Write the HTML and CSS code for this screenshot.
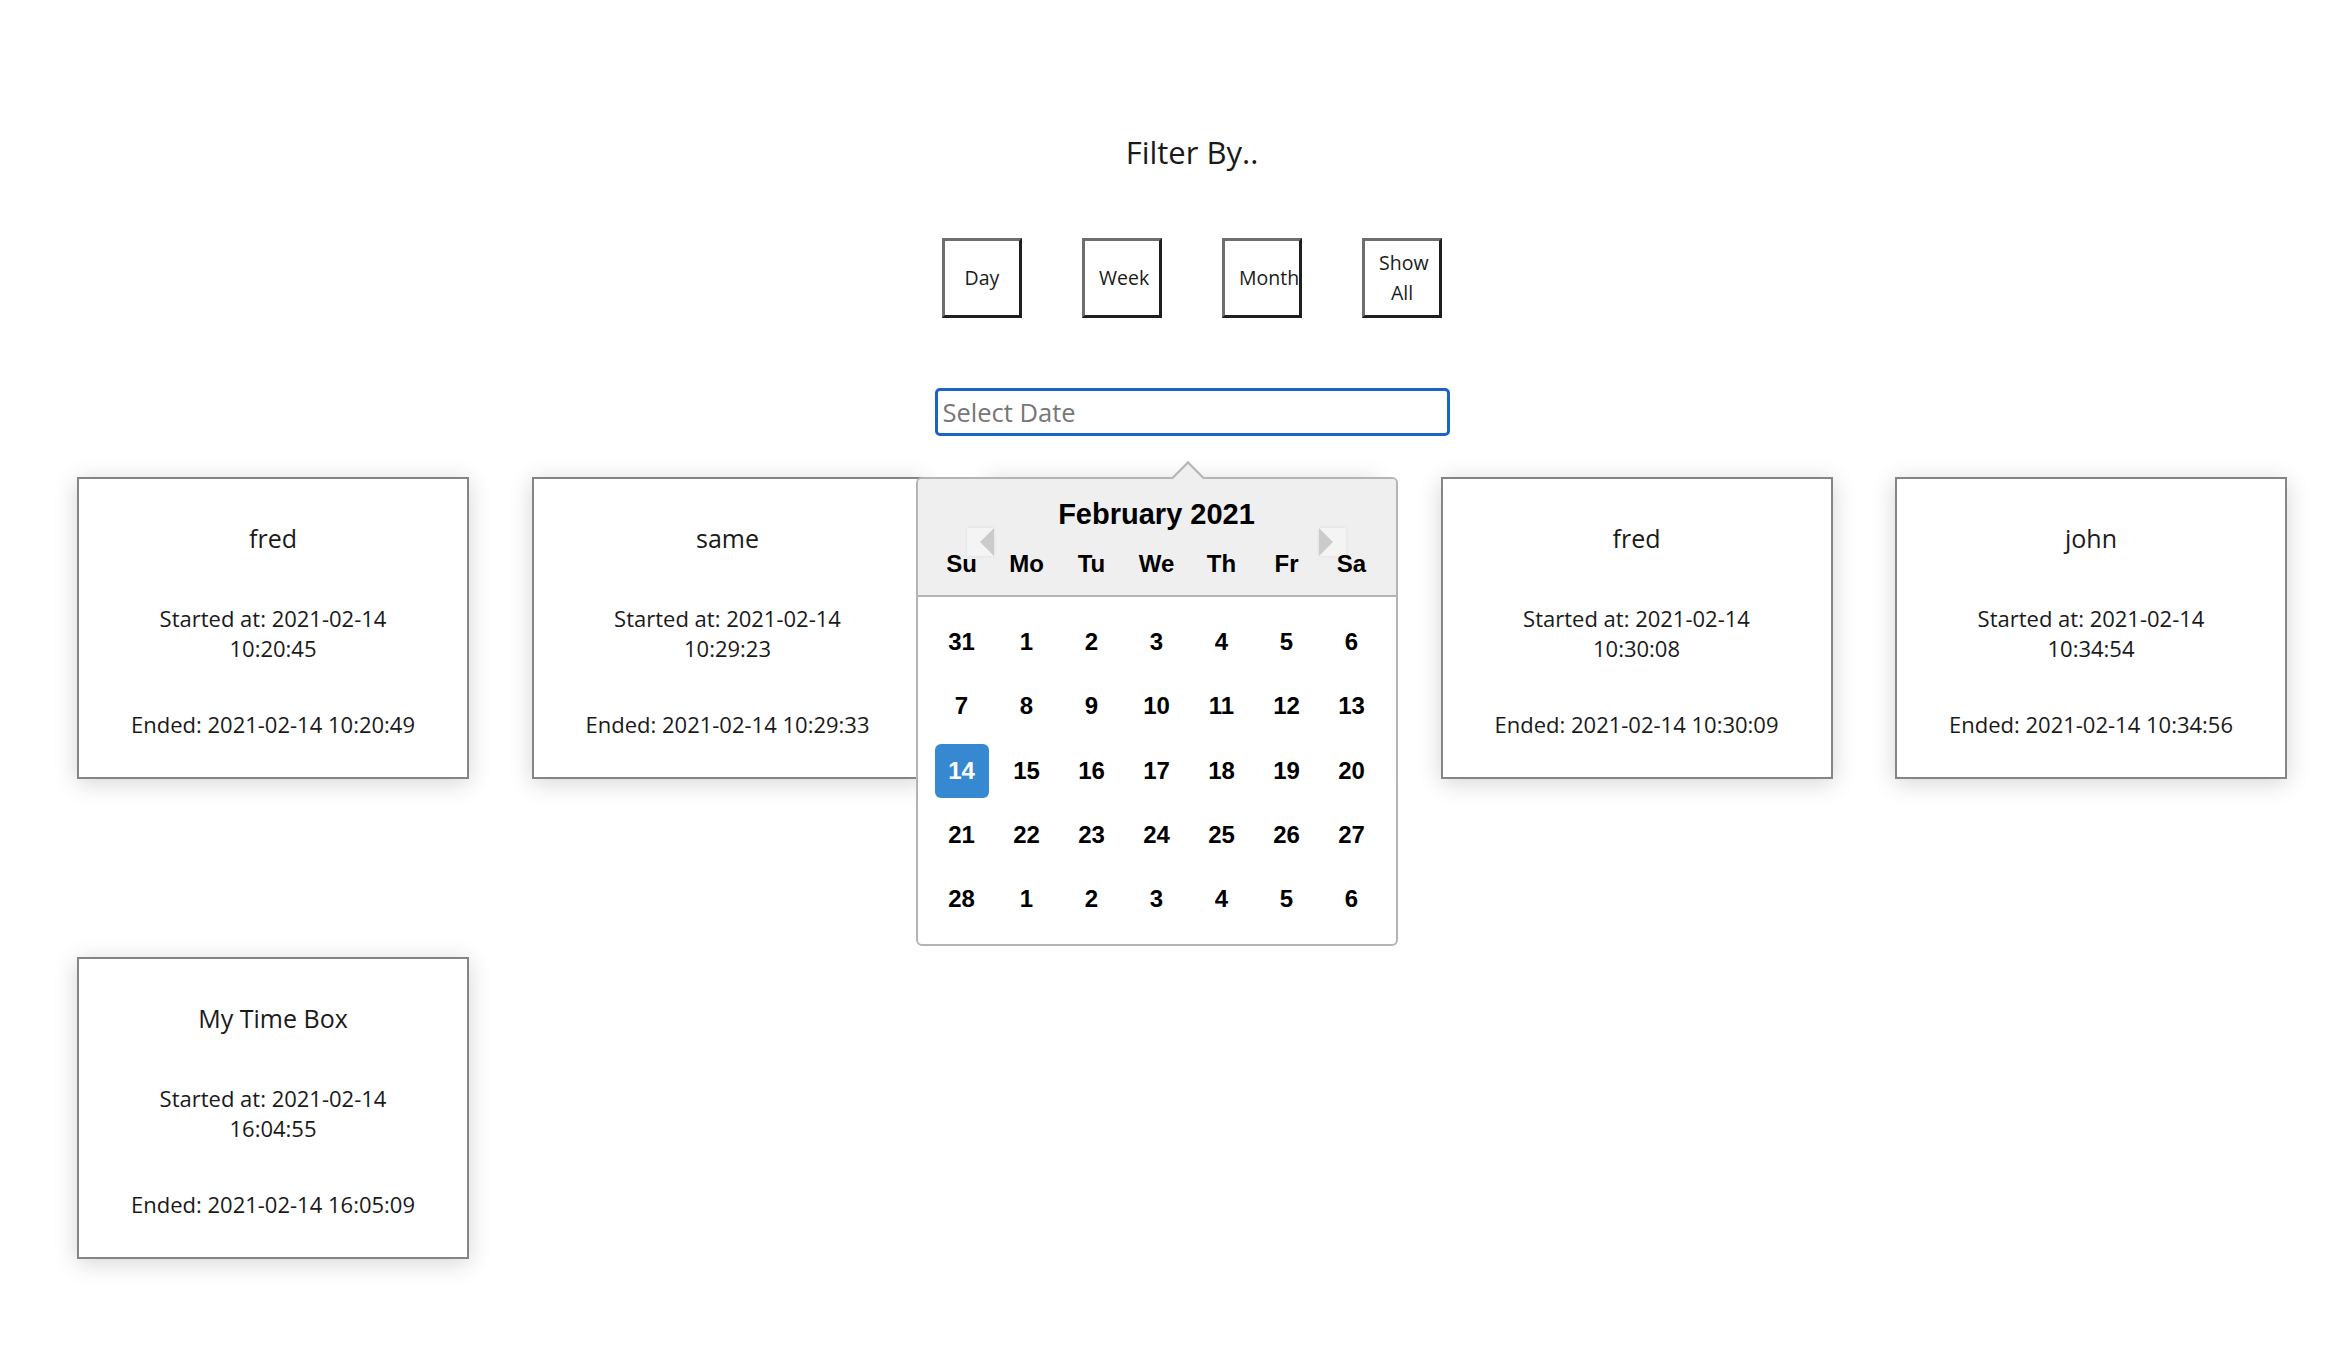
FILE: index.html
```html
<!DOCTYPE html>
<html lang="en">
<head>
<meta charset="utf-8">
<title>Time Boxes</title>
<link rel="stylesheet" href="styles.css">
</head>
<body>
<div class="top">
  <h1 class="filter-title">Filter By..</h1>
  <div class="filters">
    <button class="fbtn">Day</button>
    <button class="fbtn">Week</button>
    <button class="fbtn">Month</button>
    <button class="fbtn">Show All</button>
  </div>
  <div class="picker">
    <input class="date-input" type="text" placeholder="Select Date">
    <div class="cal">
      <div class="cal-tip"></div>
      <div class="cal-head">
        <div class="cal-title">February 2021</div>
        <button class="cal-nav cal-prev" aria-label="Previous month"><svg width="27" height="28" viewBox="0 0 27 28"><polygon points="13,14 27,0 27,28" fill="#cbcbcb"/></svg></button>
        <button class="cal-nav cal-next" aria-label="Next month"><svg width="27" height="28" viewBox="0 0 27 28"><polygon points="0,0 14,14 0,28" fill="#cbcbcb"/></svg></button>
        <div class="cal-grid cal-dows">
          <span>Su</span><span>Mo</span><span>Tu</span><span>We</span><span>Th</span><span>Fr</span><span>Sa</span>
        </div>
      </div>
      <div class="cal-grid cal-days">
        <span>31</span><span>1</span><span>2</span><span>3</span><span>4</span><span>5</span><span>6</span>
        <span>7</span><span>8</span><span>9</span><span>10</span><span>11</span><span>12</span><span>13</span>
        <span><b class="sel">14</b></span><span>15</span><span>16</span><span>17</span><span>18</span><span>19</span><span>20</span>
        <span>21</span><span>22</span><span>23</span><span>24</span><span>25</span><span>26</span><span>27</span>
        <span>28</span><span>1</span><span>2</span><span>3</span><span>4</span><span>5</span><span>6</span>
      </div>
    </div>
  </div>
</div>
<div class="cards">
  <div class="card">
    <div class="card-title">fred</div>
    <p class="card-start">Started at: 2021-02-14 10:20:45</p>
    <p class="card-end">Ended: 2021-02-14 10:20:49</p>
  </div>
  <div class="card">
    <div class="card-title">same</div>
    <p class="card-start">Started at: 2021-02-14 10:29:23</p>
    <p class="card-end">Ended: 2021-02-14 10:29:33</p>
  </div>
  <div class="card card-hidden" aria-hidden="true"></div>
  <div class="card">
    <div class="card-title">fred</div>
    <p class="card-start">Started at: 2021-02-14 10:30:08</p>
    <p class="card-end">Ended: 2021-02-14 10:30:09</p>
  </div>
  <div class="card">
    <div class="card-title">john</div>
    <p class="card-start">Started at: 2021-02-14 10:34:54</p>
    <p class="card-end">Ended: 2021-02-14 10:34:56</p>
  </div>
  <div class="card">
    <div class="card-title">My Time Box</div>
    <p class="card-start">Started at: 2021-02-14 16:04:55</p>
    <p class="card-end">Ended: 2021-02-14 16:05:09</p>
  </div>
</div>
</body>
</html>
```
FILE: styles.css
```css
html, body {
  margin: 0;
  padding: 0;
  background: #fff;
}
body {
  font-family: "Open Sans", "Noto Sans", sans-serif;
  color: #1a1a1a;
  width: 2348px;
  min-height: 1346px;
}
.top {
  padding: 131px 0 0 36px;
  text-align: center;
}
.filter-title {
  margin: 0;
  font-size: 31px;
  font-weight: 400;
  line-height: 42px;
}
.filters {
  display: flex;
  justify-content: center;
  gap: 60px;
  margin-top: 65px;
}
.fbtn {
  box-sizing: border-box;
  width: 80px;
  height: 80px;
  padding: 0 14px;
  background: #fff;
  border-style: solid;
  border-width: 3px;
  border-color: #6e6e6e #1e1e1e #1e1e1e #6e6e6e;
  font-family: "Open Sans", sans-serif;
  font-size: 19.5px;
  line-height: 30px;
  color: #1a1a1a;
  text-align: center;
  white-space: normal;
}
.picker {
  position: relative;
  width: 515px;
  margin: 70px auto 0;
}
.date-input {
  display: block;
  box-sizing: border-box;
  width: 100%;
  height: 48px;
  padding: 0 5px;
  border: 3px solid #1a63c9;
  border-radius: 5px;
  outline: none;
  font-family: "Open Sans", sans-serif;
  font-size: 25.5px;
  color: #1a1a1a;
  background: #fff;
}
.date-input::placeholder {
  color: #777;
}
.cal {
  position: absolute;
  left: -19px;
  top: 89px;
  z-index: 10;
  box-sizing: border-box;
  width: 482px;
  border: 2px solid #b4b4b4;
  border-radius: 6px;
  background: #fff;
  font-family: "Liberation Sans", Arial, sans-serif;
  font-weight: 700;
  color: #000;
  text-align: center;
}
.cal-tip {
  position: absolute;
  left: 258px;
  top: -13px;
  width: 24px;
  height: 24px;
  box-sizing: border-box;
  background: #efefef;
  border-top: 2px solid #b4b4b4;
  border-left: 2px solid #b4b4b4;
  transform: rotate(45deg);
  z-index: 2;
}
.cal-head {
  position: relative;
  box-sizing: border-box;
  height: 118px;
  padding-top: 18px;
  background: #efefef;
  border-bottom: 2px solid #b4b4b4;
  border-radius: 4px 4px 0 0;
}
.cal-title {
  position: relative;
  z-index: 3;
  font-size: 29px;
  line-height: 34px;
}
.cal-nav {
  position: absolute;
  top: 49px;
  width: 27px;
  height: 28px;
  padding: 0;
  border: 0;
  background: #f4f4f4;
  box-shadow: 0 0 3px rgba(0, 0, 0, 0.08);
  display: flex;
}
.cal-prev { left: 49px; }
.cal-next { left: 401px; }
.cal-grid {
  display: grid;
  grid-template-columns: repeat(7, 65px);
  justify-content: center;
}
.cal-dows {
  margin-top: 18px;
  font-size: 24px;
  line-height: 30px;
}
.cal-dows span {
  position: relative;
  z-index: 1;
}
.cal-days {
  grid-auto-rows: 64.3px;
  padding: 13px 0 13px;
  font-size: 24px;
}
.cal-days span {
  display: flex;
  align-items: center;
  justify-content: center;
}
.sel {
  display: flex;
  align-items: center;
  justify-content: center;
  width: 54px;
  height: 54px;
  border-radius: 6px;
  background: #3689d0;
  color: #fff;
}
.cards {
  display: grid;
  grid-template-columns: repeat(5, 392px);
  column-gap: 62.5px;
  row-gap: 178px;
  padding: 41px 0 0 77px;
}
.card {
  box-sizing: border-box;
  height: 302px;
  padding: 42px 45px 0;
  border: 2px solid #858585;
  background: #fff;
  box-shadow: 0 4px 22px rgba(0, 0, 0, 0.17);
  text-align: center;
  font-size: 22px;
  line-height: 29.5px;
}
.card-title {
  font-size: 25px;
  line-height: 34px;
}
.card p {
  margin: 0;
}
.card-start {
  margin-top: 49px !important;
}
.card-end {
  margin-top: 47px !important;
}
```
